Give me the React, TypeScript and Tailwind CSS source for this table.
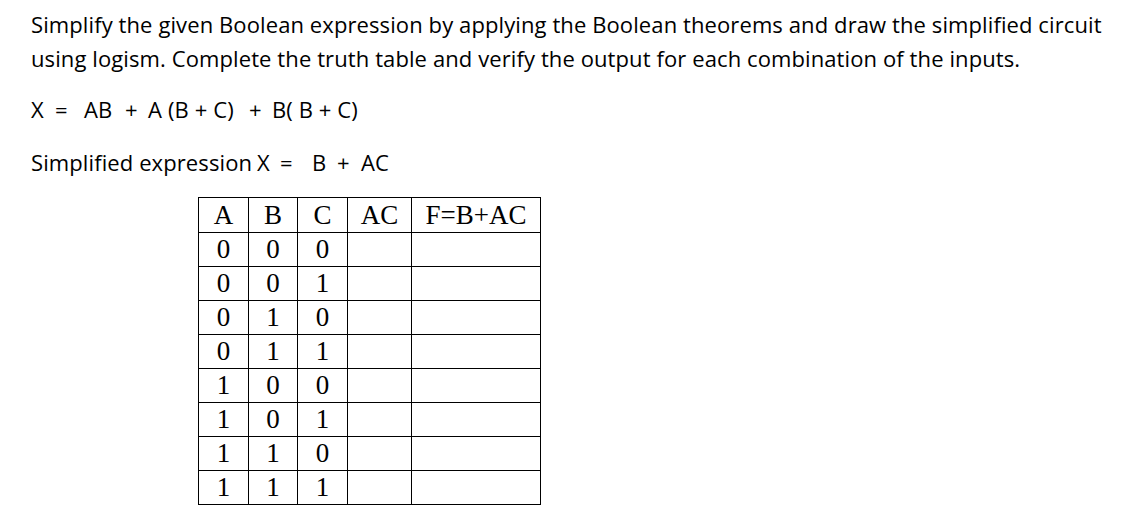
import React from "react";

const rows = [
  ["0", "0", "0"],
  ["0", "0", "1"],
  ["0", "1", "0"],
  ["0", "1", "1"],
  ["1", "0", "0"],
  ["1", "0", "1"],
  ["1", "1", "0"],
  ["1", "1", "1"],
];

export default function App() {
  return (
    <div className="w-[1125px] h-[524px] bg-white text-black overflow-hidden">
      <div
        className="pl-[31px] pt-[7px] text-[22px] leading-[34px] tracking-[0.1px] whitespace-pre [font-variant-ligatures:none]"
        style={{ fontFamily: "'Open Sans', Lato, sans-serif" }}
      >
        <p>Simplify the given Boolean expression by applying the Boolean theorems and draw the simplified circuit</p>
        <p>using logism. Complete the truth table and verify the output for each combination of the inputs.</p>
        <div className="mt-[17px] flex h-[34px]">
          <span className="w-[24px]">X</span>
          <span className="w-[29px]">=</span>
          <span className="w-[41px]">AB</span>
          <span className="w-[23px]">+</span>
          <span className="w-[101px]">
            A<span className="ml-[6px]">(B + C)</span>
          </span>
          <span className="w-[23px]">+</span>
          <span>B( B + C)</span>
        </div>
        <div className="mt-[19px] flex h-[34px]">
          <span className="w-[226px]">Simplified expression</span>
          <span className="w-[23px]">X</span>
          <span className="w-[32px]">=</span>
          <span className="w-[25px]">B</span>
          <span className="w-[24px]">+</span>
          <span>AC</span>
        </div>
      </div>
      <table
        className="ml-[198px] mt-[18px] border-collapse text-[27px] leading-none"
        style={{ fontFamily: "'Liberation Serif', serif" }}
      >
        <thead>
          <tr className="h-[35px]">
            <th className="w-[50px] border border-black font-normal">A</th>
            <th className="w-[49px] border border-black font-normal">B</th>
            <th className="w-[50px] border border-black font-normal">C</th>
            <th className="w-[64px] border border-black font-normal">AC</th>
            <th className="w-[129px] border border-black font-normal">F=B+AC</th>
          </tr>
        </thead>
        <tbody>
          {rows.map((r, i) => (
            <tr key={i} className="h-[34px]">
              <td className="border border-black text-center">{r[0]}</td>
              <td className="border border-black text-center">{r[1]}</td>
              <td className="border border-black text-center">{r[2]}</td>
              <td className="border border-black"></td>
              <td className="border border-black"></td>
            </tr>
          ))}
        </tbody>
      </table>
    </div>
  );
}
